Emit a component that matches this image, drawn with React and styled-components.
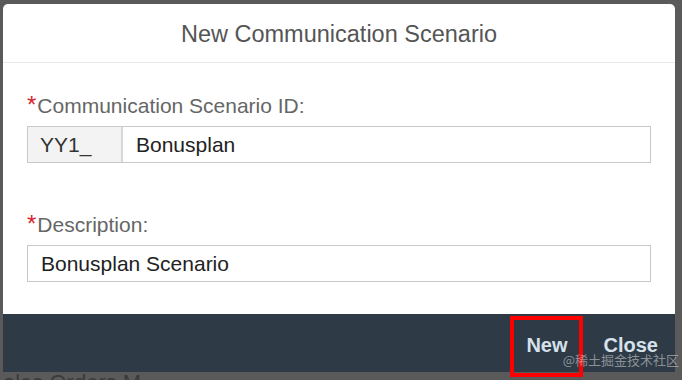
import React from 'react';
import styled, {createGlobalStyle} from "styled-components";

const GlobalStyle = createGlobalStyle`
  body {
    margin: 0;
    background: #5a5a5a;
    font-family: "Liberation Sans", Arial, sans-serif;
  }
`

const fields = [
    {label: 'Communication Scenario ID:', prefix: 'YY1_', value: 'Bonusplan'},
    {label: 'Description:', value: 'Bonusplan Scenario'},
]

const App = () => {
    return (
        <Page>
            <GlobalStyle/>
            <Dialog>
                <Header>New Communication Scenario</Header>
                <Content>
                    {fields.map((f) => (
                        <Field key={f.label}>
                            <Label><Star>*</Star>{f.label}</Label>
                            <InputRow>
                                {f.prefix && <Prefix>{f.prefix}</Prefix>}
                                <Input>{f.value}</Input>
                            </InputRow>
                        </Field>
                    ))}
                </Content>
                <Footer>
                    <Button>New</Button>
                    <Button>Close</Button>
                    <Highlight/>
                    <Watermark>@稀土掘金技术社区</Watermark>
                </Footer>
            </Dialog>
            <Behind>ales Orders M</Behind>
        </Page>
    );
};

const Page = styled.div`
  height: 380px;
  overflow: hidden;
  padding: 4px 7px 0 3px;
  box-sizing: border-box;
`

const Dialog = styled.div`
  width: 672px;
  background: #fff;
  border-radius: 5px 5px 0 0;
`

const Header = styled.div`
  height: 59px;
  border-bottom: 1px solid #e8e8e8;
  display: flex;
  align-items: center;
  justify-content: center;
  font-size: 23.5px;
  color: #555;
  padding-top: 2px;
  box-sizing: border-box;
`

const Content = styled.div`
  padding: 30px 24px 32px 24px;
  display: flex;
  flex-direction: column;
  gap: 49px;
`

const Field = styled.div`
  display: flex;
  flex-direction: column;
  gap: 8px;
`

const Label = styled.div`
  font-size: 21px;
  line-height: 24px;
  color: #666;
`

const Star = styled.span`
  color: #d8262e;
  font-size: 24px;
  margin-right: 1px;
`

const InputRow = styled.div`
  display: flex;
  height: 37px;
  border: 1px solid #c9c9c9;
  box-sizing: border-box;
`

const Prefix = styled.div`
  width: 95px;
  background: #f3f3f3;
  border-right: 2px solid #d8d8d8;
  display: flex;
  align-items: center;
  padding-left: 12px;
  box-sizing: border-box;
  font-size: 21px;
  color: #333;
`

const Input = styled.div`
  flex: 1;
  display: flex;
  align-items: center;
  padding-left: 13px;
  font-size: 21px;
  color: #222;
`

const Footer = styled.div`
  position: relative;
  height: 58px;
  background: #2e3b47;
  display: flex;
  justify-content: flex-end;
  align-items: center;
  padding: 4px 17px 0 0;
  box-sizing: border-box;
  gap: 36px;
`

const Button = styled.div`
  font-size: 20px;
  font-weight: bold;
  color: #d6e1ec;
`

const Highlight = styled.div`
  position: absolute;
  left: 507px;
  top: 2px;
  width: 73px;
  height: 61px;
  border: 4px solid #f00;
  box-sizing: border-box;
`

const Watermark = styled.div`
  position: absolute;
  right: -4px;
  bottom: 3px;
  font-size: 13px;
  color: rgba(220, 220, 220, 0.55);
  font-family: "Noto Sans CJK SC", sans-serif;
`

const Behind = styled.div`
  font-size: 22px;
  color: #3a3a3a;
  line-height: 22px;
  margin-top: 0;
`

export default App;
